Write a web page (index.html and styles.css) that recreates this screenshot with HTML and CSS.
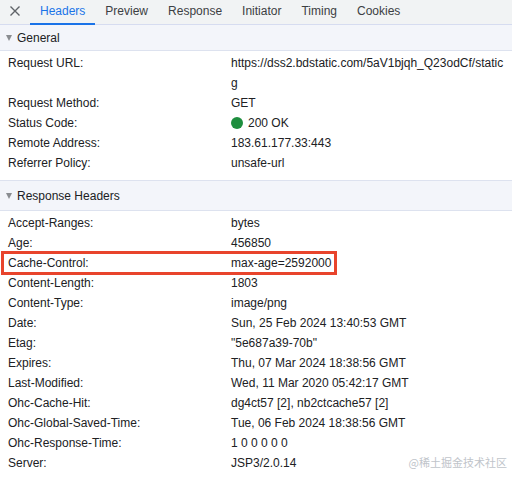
FILE: index.html
```html
<!DOCTYPE html>
<html lang="en">
<head>
    <meta charset="UTF-8">
    <title>Headers</title>
    <link rel="stylesheet" href="styles.css">
</head>
<body>

<div class="tabbar">
    <span class="close">
        <svg width="12" height="12" viewBox="0 0 12 12"><path d="M1.5 1.5 L10.5 10.5 M10.5 1.5 L1.5 10.5" stroke="#5f6368" stroke-width="1.4" fill="none"/></svg>
    </span>
    <span class="tab active">Headers</span>
    <span class="tab">Preview</span>
    <span class="tab">Response</span>
    <span class="tab">Initiator</span>
    <span class="tab">Timing</span>
    <span class="tab">Cookies</span>
</div>

<div class="section-title"><span class="arrow"></span>General</div>
<div class="rows">
    <div class="row"><span class="key">Request URL:</span><span class="val">https://dss2.bdstatic.com/5aV1bjqh_Q23odCf/static<br>g</span></div>
    <div class="row"><span class="key">Request Method:</span><span class="val">GET</span></div>
    <div class="row"><span class="key">Status Code:</span><span class="val"><span class="dot"></span>200 OK</span></div>
    <div class="row"><span class="key">Remote Address:</span><span class="val">183.61.177.33:443</span></div>
    <div class="row"><span class="key">Referrer Policy:</span><span class="val">unsafe-url</span></div>
</div>

<div class="section-title sep"><span class="arrow"></span>Response Headers</div>
<div class="rows">
    <div class="row"><span class="key">Accept-Ranges:</span><span class="val">bytes</span></div>
    <div class="row"><span class="key">Age:</span><span class="val">456850</span></div>
    <div class="row marked"><span class="key">Cache-Control:</span><span class="val">max-age=2592000</span></div>
    <div class="row"><span class="key">Content-Length:</span><span class="val">1803</span></div>
    <div class="row"><span class="key">Content-Type:</span><span class="val">image/png</span></div>
    <div class="row"><span class="key">Date:</span><span class="val">Sun, 25 Feb 2024 13:40:53 GMT</span></div>
    <div class="row"><span class="key">Etag:</span><span class="val">"5e687a39-70b"</span></div>
    <div class="row"><span class="key">Expires:</span><span class="val">Thu, 07 Mar 2024 18:38:56 GMT</span></div>
    <div class="row"><span class="key">Last-Modified:</span><span class="val">Wed, 11 Mar 2020 05:42:17 GMT</span></div>
    <div class="row"><span class="key">Ohc-Cache-Hit:</span><span class="val">dg4ct57 [2], nb2ctcache57 [2]</span></div>
    <div class="row"><span class="key">Ohc-Global-Saved-Time:</span><span class="val">Tue, 06 Feb 2024 18:38:56 GMT</span></div>
    <div class="row"><span class="key">Ohc-Response-Time:</span><span class="val">1 0 0 0 0 0</span></div>
    <div class="row"><span class="key">Server:</span><span class="val">JSP3/2.0.14</span></div>
</div>

<div class="watermark">@稀土掘金技术社区</div>

</body>
</html>
```

FILE: styles.css
```css
body {
    margin: 0;
    font-family: "Liberation Sans", Arial, sans-serif;
    font-size: 12px;
    color: #202124;
    background: #fff;
    width: 512px;
    height: 478px;
    overflow: hidden;
    position: relative;
}
.tabbar {
    display: flex;
    align-items: stretch;
    height: 25px;
    background: #f1f3f4;
    border-bottom: 1px solid #d6dcf0;
    box-sizing: border-box;
}
.close {
    display: flex;
    align-items: center;
    justify-content: center;
    width: 30px;
    padding-bottom: 2px;
}
.tab {
    display: flex;
    align-items: center;
    padding: 0 10px 2px;
    color: #3c4043;
    border-bottom: 2px solid transparent;
    margin-bottom: -1px;
}
.tab.active {
    color: #1a73e8;
    border-bottom-color: #1a73e8;
}
.section-title {
    display: flex;
    align-items: center;
    height: 25px;
    padding-left: 6px;
    background: #f3f5fa;
    border-bottom: 1px solid #dde2ef;
    color: #202124;
}
.section-title.sep {
    border-top: 1px solid #dde2ef;
    margin-top: 7px;
    height: 29px;
}
.arrow {
    width: 0;
    height: 0;
    border-left: 3px solid transparent;
    border-right: 3px solid transparent;
    border-top: 6px solid #8a8d91;
    margin-right: 5px;
}
.rows {
    padding-top: 2px;
}
.row {
    display: flex;
    line-height: 20px;
    padding-left: 8px;
    width: 326px;
}
.key {
    width: 223px;
    flex-shrink: 0;
}
.val {
    white-space: nowrap;
}
.marked {
    outline: 3px solid #e8442c;
    outline-offset: -1px;
    margin-left: 3px;
    padding-left: 5px;
    width: 327px;
}
.dot {
    display: inline-block;
    width: 12px;
    height: 12px;
    border-radius: 50%;
    background: #1e8e3e;
    vertical-align: -2px;
    margin-right: 5px;
}
.watermark {
    position: absolute;
    right: 5px;
    bottom: 8px;
    font-family: "Noto Sans CJK SC", sans-serif;
    font-size: 11px;
    color: #c0c4ca;
}
```
